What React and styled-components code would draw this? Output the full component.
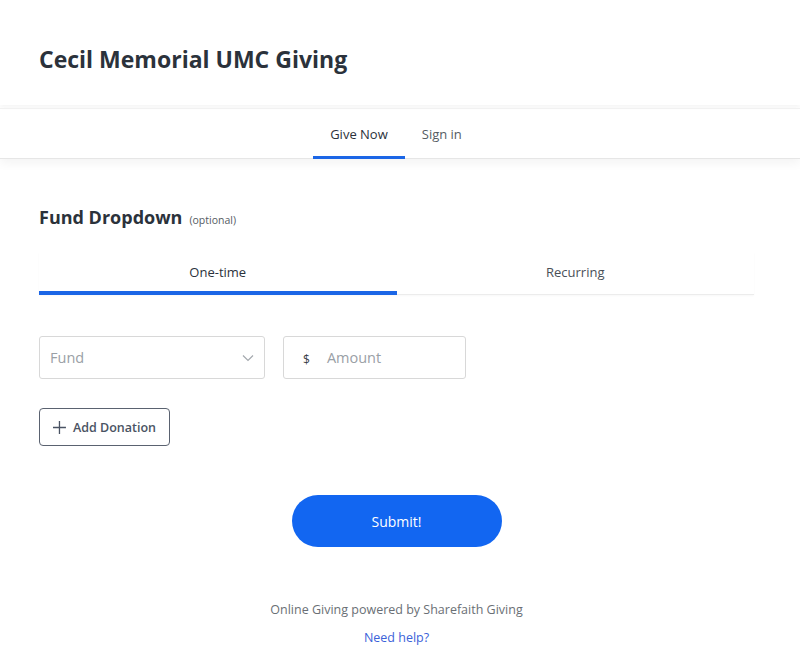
import React from "react";
import styled, { createGlobalStyle } from "styled-components";

const Global = createGlobalStyle`
  body { margin: 0; background: #fff; font-family: "Open Sans", "Noto Sans", sans-serif; color: #2d333a; }
  * { box-sizing: border-box; }
`;

const Header = styled.header`
  height: 105px;
  padding: 0 39px;
  display: flex;
  align-items: center;
  box-shadow: 0 2px 4px rgba(0,0,0,0.04);
`;

const Title = styled.h1`
  margin: 0;
  padding-top: 12px;
  font-size: 23px;
  font-weight: 700;
  color: #2b323b;
`;

const Nav = styled.nav`
  height: 51px;
  margin-top: 3px;
  display: flex;
  justify-content: center;
  border-top: 1px solid #f1f1f1;
  border-bottom: 1px solid #e6e6e6;
  box-shadow: 0 4px 10px rgba(0,0,0,0.05);
  padding-right: 8px;
`;

const NavItem = styled.a`
  display: flex;
  align-items: center;
  padding: 3px 17px 0;
  font-size: 13px;
  color: ${p => (p.$active ? "#2b323b" : "#555c63")};
  border-bottom: 3px solid ${p => (p.$active ? "#1b66e6" : "transparent")};
  margin-bottom: -1px;
`;

const Main = styled.main`
  padding: 46px 46px 0 39px;
`;

const SectionTitle = styled.div`
  display: flex;
  align-items: baseline;
  gap: 7px;
  h2 {
    margin: 0;
    font-size: 18px;
    font-weight: 700;
    color: #2b323b;
  }
  span {
    font-size: 10.5px;
    color: #555c63;
  }
`;

const Tabs = styled.div`
  margin-top: 23px;
  display: grid;
  grid-template-columns: 1fr 1fr;
  border-bottom: 1px solid #ececec;
  box-shadow: 0 1px 2px rgba(0,0,0,0.03);
`;

const Tab = styled.div`
  height: 43px;
  display: flex;
  justify-content: center;
  align-items: center;
  font-size: 13px;
  color: ${p => (p.$active ? "#2b323b" : "#4a5058")};
  border-bottom: 4px solid ${p => (p.$active ? "#1b66e6" : "transparent")};
  margin-bottom: -1px;
`;

const Row = styled.div`
  margin-top: 41px;
  display: flex;
  gap: 18px;
`;

const Field = styled.div`
  width: ${p => p.$w}px;
  height: 43px;
  border: 1px solid #d8d8d8;
  border-radius: 3px;
  display: flex;
  align-items: center;
  padding: 0 10px;
  font-size: 14.5px;
  color: #9aa0a6;
`;

const Grow = styled.span`
  flex: 1;
`;

const Dollar = styled.span`
  font-size: 12px;
  color: #3a4048;
  margin-left: 9px;
  margin-right: 17px;
  padding-top: 3px;
`;

const AddButton = styled.button`
  margin-top: 29px;
  height: 38px;
  width: 131px;
  border: 1px solid #5a6270;
  border-radius: 4px;
  background: #fff;
  display: flex;
  align-items: center;
  gap: 7px;
  padding: 0 13px;
  white-space: nowrap;
  font-family: inherit;
  font-size: 12.5px;
  font-weight: 600;
  color: #4a5363;
`;

const SubmitWrap = styled.div`
  display: flex;
  justify-content: center;
  margin-top: 49px;
`;

const Submit = styled.button`
  width: 210px;
  height: 52px;
  border: none;
  border-radius: 26px;
  background: #1266f1;
  color: #fff;
  font-family: inherit;
  font-size: 14px;
  font-weight: 500;
`;

const Footer = styled.footer`
  margin-top: 54px;
  display: flex;
  flex-direction: column;
  align-items: center;
  gap: 11px;
  font-size: 12.5px;
  color: #6a6f75;
  a { color: #3b62d9; text-decoration: none; }
`;

export default function App() {
  return (
    <>
      <Global />
      <Header>
        <Title>Cecil Memorial UMC Giving</Title>
      </Header>
      <Nav>
        <NavItem $active>Give Now</NavItem>
        <NavItem>Sign in</NavItem>
      </Nav>
      <Main>
        <SectionTitle>
          <h2>Fund Dropdown</h2>
          <span>(optional)</span>
        </SectionTitle>
        <Tabs>
          <Tab $active>One-time</Tab>
          <Tab>Recurring</Tab>
        </Tabs>
        <Row>
          <Field $w={226}>
            <Grow>Fund</Grow>
            <svg width="12" height="8" viewBox="0 0 12 8">
              <path d="M1 1.5l5 5 5-5" fill="none" stroke="#a4a9ae" strokeWidth="1.2" />
            </svg>
          </Field>
          <Field $w={183}>
            <Dollar>$</Dollar>
            <span>Amount</span>
          </Field>
        </Row>
        <AddButton>
          <svg width="13" height="13" viewBox="0 0 13 13">
            <path d="M6.5 0v13M0 6.5h13" stroke="#4a5363" strokeWidth="1.3" />
          </svg>
          Add Donation
        </AddButton>
        <SubmitWrap>
          <Submit>Submit!</Submit>
        </SubmitWrap>
        <Footer>
          <div>Online Giving powered by Sharefaith Giving</div>
          <a href="#">Need help?</a>
        </Footer>
      </Main>
    </>
  );
}
